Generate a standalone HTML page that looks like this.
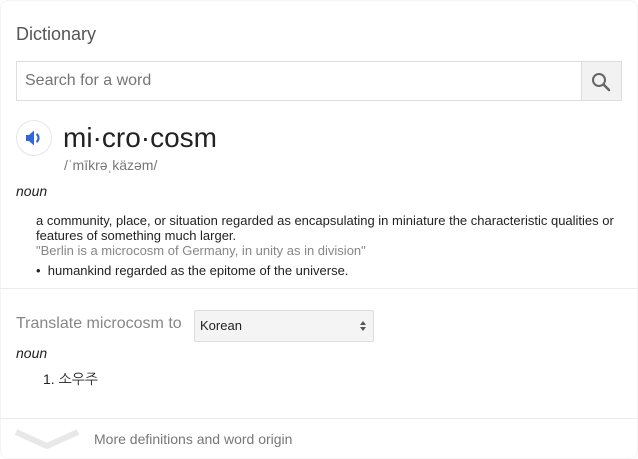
<!DOCTYPE html>
<html><head><meta charset="utf-8"><style>
*{margin:0;padding:0;box-sizing:border-box}
body{width:638px;height:459px;background:#fff;font-family:"Liberation Sans",Arial,sans-serif;position:relative;overflow:hidden;color:#222}
.a{position:absolute;white-space:nowrap}
</style></head><body>
<div class="a" style="left:0;top:0;width:638px;height:459px;border:1px solid #f4f4f4;border-radius:8px"></div>
<div class="a" style="left:16px;top:24px;font-size:18px;color:#555">Dictionary</div>
<div class="a" style="left:16px;top:61px;width:606px;height:40px;border:1px solid #ddd"></div>
<div class="a" style="left:25px;top:72px;font-size:16px;color:#757575">Search for a word</div>
<div class="a" style="left:581px;top:62px;width:40px;height:38px;background:#f2f2f2;border-left:1px solid #ddd"></div>
<svg class="a" style="left:590px;top:71px" width="22" height="22" viewBox="0 0 22 22"><circle cx="9" cy="9" r="6" fill="none" stroke="#666" stroke-width="2"/><path d="M13.5 13.5L19 19" stroke="#666" stroke-width="2.5" stroke-linecap="round"/></svg>
<div class="a" style="left:16px;top:120px;width:36px;height:36px;border:1px solid #e6e6e6;border-radius:50%"></div>
<svg class="a" style="left:24px;top:129px" width="20" height="18" viewBox="0 0 20 18"><path d="M2 6h3l5-4.5v15L5 12H2z" fill="#3367d6"/><path d="M12.5 5a5 5 0 0 1 0 8" stroke="#3367d6" stroke-width="2.2" fill="none"/></svg>
<div class="a" style="left:63px;top:122px;font-size:28px;color:#222">mi·cro·cosm</div>
<div class="a" style="left:64px;top:157px;font-size:14px;color:#777">/ˈmīkrəˌkäzəm/</div>
<div class="a" style="left:16px;top:183px;font-size:14px;font-style:italic;color:#222">noun</div>
<div class="a" style="left:36px;top:213px;font-size:13px;color:#222;line-height:15px">a community, place, or situation regarded as encapsulating in miniature the characteristic qualities or<br>features of something much larger.</div>
<div class="a" style="left:36px;top:243px;font-size:13px;color:#878787">"Berlin is a microcosm of Germany, in unity as in division"</div>
<div class="a" style="left:36px;top:263px;font-size:13px;color:#222">•&nbsp; humankind regarded as the epitome of the universe.</div>
<div class="a" style="left:0;top:288px;width:638px;height:1px;background:#ececec"></div>
<div class="a" style="left:16px;top:315px;font-size:16px;color:#878787">Translate microcosm to</div>
<div class="a" style="left:194px;top:310px;width:180px;height:32px;background:#f4f4f4;border:1px solid #ddd;border-radius:2px"></div>
<div class="a" style="left:200px;top:318px;font-size:13px;color:#222">Korean</div>
<svg class="a" style="left:359px;top:319px" width="8" height="14" viewBox="0 0 8 14"><path d="M1 6L4 2 7 6zM1 8L4 12 7 8z" fill="#555"/></svg>
<div class="a" style="left:16px;top:345px;font-size:14px;font-style:italic;color:#222">noun</div>
<div class="a" style="left:43px;top:371px;font-size:14px;color:#222;font-family:'Liberation Sans','NanumGothic','Noto Sans CJK KR',sans-serif">1. 소우주</div>
<div class="a" style="left:0;top:418px;width:638px;height:1px;background:#ececec"></div>
<svg class="a" style="left:14px;top:428px" width="66" height="24" viewBox="0 0 66 24"><path d="M2 4L33 18 64 4" stroke="#e8e8e8" stroke-width="6" fill="none"/></svg>
<div class="a" style="left:94px;top:431px;font-size:14px;color:#777">More definitions and word origin</div>
</body></html>
